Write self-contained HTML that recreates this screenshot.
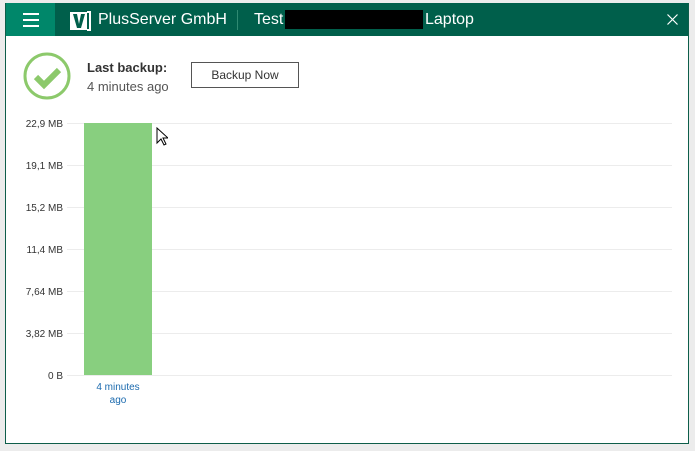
<!DOCTYPE html>
<html><head><style>
body{margin:0;width:695px;height:451px;background:#ececec;font-family:"Liberation Sans",sans-serif;position:relative;overflow:hidden}
.win{position:absolute;left:5px;top:3px;width:682px;height:440px;background:#fff;border:1px solid #0e5e4a;border-top:none}
.tb{position:absolute;left:0;top:0;width:682px;height:33px;background:#005f4b}
.hm{position:absolute;left:0;top:0;width:49px;height:33px;background:#00876a}
.hm i{position:absolute;left:17px;width:16px;height:2px;background:#fff}
.t{position:absolute;color:#fff;font-size:16px;top:8px}
.lbl{position:absolute;right:632px;font-size:10px;color:#333;text-align:right}
.gl{position:absolute;left:67px;width:605px;height:1px;background:#ececec}
</style></head><body>
<div class="win">
<div class="tb">
<div class="hm"><i style="top:10px"></i><i style="top:16px"></i><i style="top:22px"></i></div>
<svg style="position:absolute;left:64px;top:8px" width="22" height="20" viewBox="0 0 22 20"><rect x="0" y="1" width="17" height="18" fill="#fff"/><path d="M17 1h3v18h-3" fill="none" stroke="#fff" stroke-width="2"/><path d="M3 3h4l2 10 2-10h4l-4 14h-4z" fill="#005f4b"/></svg>
<div class="t" style="left:92px">PlusServer GmbH</div>
<div style="position:absolute;left:231px;top:7px;width:1px;height:20px;background:#2f8a72"></div>
<div class="t" style="left:248px">Test</div>
<div style="position:absolute;left:279px;top:7px;width:138px;height:19px;background:#000"></div>
<div class="t" style="left:419px">Laptop</div>
<svg style="position:absolute;left:661px;top:11px" width="11" height="11"><path d="M0.5 0.5l10 10M10.5 0.5l-10 10" stroke="#fff" stroke-width="1.2"/></svg>
</div>
<svg style="position:absolute;left:16px;top:48px" width="50" height="50"><circle cx="25" cy="25" r="22" fill="none" stroke="#8cc96b" stroke-width="3"/><path d="M14 26l8 8 15-15" fill="none" stroke="#8cc96b" stroke-width="6"/></svg>
<div style="position:absolute;left:81px;top:57px;font-size:13px;font-weight:bold;color:#333">Last backup:</div>
<div style="position:absolute;left:81px;top:76px;font-size:13px;color:#555">4 minutes ago</div>
<div style="position:absolute;left:185px;top:59px;width:108px;height:26px;border:1px solid #555;box-sizing:border-box;font-size:12px;color:#333;text-align:center;line-height:24px">Backup Now</div>
</div>
<div class="lbl" style="top:119px">22,9 MB</div><div class="gl" style="top:123px"></div>
<div class="lbl" style="top:161px">19,1 MB</div><div class="gl" style="top:165px"></div>
<div class="lbl" style="top:203px">15,2 MB</div><div class="gl" style="top:207px"></div>
<div class="lbl" style="top:245px">11,4 MB</div><div class="gl" style="top:249px"></div>
<div class="lbl" style="top:287px">7,64 MB</div><div class="gl" style="top:291px"></div>
<div class="lbl" style="top:329px">3,82 MB</div><div class="gl" style="top:333px"></div>
<div class="lbl" style="top:371px">0 B</div><div class="gl" style="top:375px"></div>
<div style="position:absolute;left:84px;top:123px;width:68px;height:252px;background:#88cf7f"></div>
<div style="position:absolute;left:78px;top:381px;width:80px;text-align:center;font-size:10px;color:#1b6aae;line-height:13px">4 minutes<br>ago</div>
<svg style="position:absolute;left:156px;top:127px" width="12" height="19"><path d="M1 1v15l4-4 3 6 2-1-3-6h5z" fill="#fff" stroke="#000"/></svg>
</body></html>
